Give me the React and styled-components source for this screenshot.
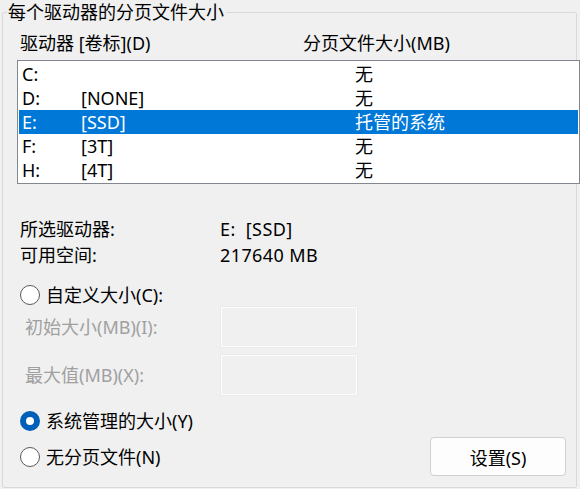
import React from 'react';
import styled, { createGlobalStyle } from 'styled-components';

const GlobalStyle = createGlobalStyle`
  html, body {
    margin: 0;
    padding: 0;
    background: #f0f0f0;
  }
  body {
    font-family: "Noto Sans", "Noto Sans CJK SC", sans-serif;
    font-size: 18px;
    color: #000;
  }
`;

const drives = [
  { letter: 'C:', label: '', size: '无' },
  { letter: 'D:', label: '[NONE]', size: '无' },
  { letter: 'E:', label: '[SSD]', size: '托管的系统', selected: true },
  { letter: 'F:', label: '[3T]', size: '无' },
  { letter: 'H:', label: '[4T]', size: '无' },
];

const App = () => {
  return (
    <>
      <GlobalStyle />
      <GroupBox>
        <Title>每个驱动器的分页文件大小</Title>

        <HeaderRow>
          <span>驱动器 [卷标](D)</span>
          <span>分页文件大小(MB)</span>
        </HeaderRow>

        <ListBox>
          {drives.map((d) => (
            <DriveRow key={d.letter} $selected={d.selected}>
              <span>{d.letter}</span>
              <span>{d.label}</span>
              <span>{d.size}</span>
            </DriveRow>
          ))}
        </ListBox>

        <InfoGrid>
          <span>所选驱动器:</span>
          <Value>E:  [SSD]</Value>
          <span>可用空间:</span>
          <Value>217640 MB</Value>
        </InfoGrid>

        <RadioRow $top={15}>
          <Radio />
          <span>自定义大小(C):</span>
        </RadioRow>

        <SizeGrid>
          <DisabledLabel>初始大小(MB)(I):</DisabledLabel>
          <SizeInput />
          <DisabledLabel>最大值(MB)(X):</DisabledLabel>
          <SizeInput />
        </SizeGrid>

        <RadioRow $top={14}>
          <Radio $checked />
          <span>系统管理的大小(Y)</span>
        </RadioRow>

        <BottomRow>
          <RadioRow $top={0}>
            <Radio />
            <span>无分页文件(N)</span>
          </RadioRow>
          <Button>设置(S)</Button>
        </BottomRow>
      </GroupBox>
    </>
  );
};

// group box drawn as a fieldset so the title cuts the top line
const GroupBox = styled.fieldset`
  box-sizing: border-box;
  margin: 0 0 0 2px;
  padding: 0;
  width: 575px;
  height: 488px;
  min-width: 0;
  border: 1px solid #d9d9d9;
  border-radius: 2px;
`;

const Title = styled.legend`
  margin-left: 4px;
  padding: 0 2px 0 1px;
  line-height: 24px;
`;

const HeaderRow = styled.div`
  display: grid;
  grid-template-columns: 283px 1fr;
  margin-top: 7px;
  padding-left: 17px;
  line-height: 24px;
`;

const ListBox = styled.div`
  margin: 5px -4px 0 14px;
  padding: 1px;
  background: #fff;
  border: 1px solid #828790;
`;

const DriveRow = styled.div`
  display: grid;
  grid-template-columns: 59px 274px 1fr;
  height: 24px;
  padding-left: 3px;
  line-height: 24px;
  white-space: nowrap;
  background: ${(p) => (p.$selected ? '#0078d7' : 'transparent')};
  color: ${(p) => (p.$selected ? '#fff' : '#000')};
`;

const InfoGrid = styled.div`
  display: grid;
  grid-template-columns: 200px 1fr;
  margin-top: 32px;
  padding-left: 17px;
  line-height: 26px;
`;

const Value = styled.span`
  white-space: pre;
  letter-spacing: 0.4px;
`;

const RadioRow = styled.div`
  display: flex;
  align-items: center;
  gap: 6px;
  height: 24px;
  margin-top: ${(p) => p.$top}px;
  padding-left: 17px;
  line-height: 24px;
`;

const Radio = styled.span`
  box-sizing: border-box;
  flex: none;
  width: 20px;
  height: 20px;
  border-radius: 50%;
  border: ${(p) => (p.$checked ? '6px solid #005fb8' : '1px solid #5a5a5a')};
  background: #fff;
`;

const SizeGrid = styled.div`
  display: grid;
  grid-template-columns: 196px 136px;
  row-gap: 8px;
  align-items: center;
  padding-left: 22px;
`;

const DisabledLabel = styled.span`
  color: #a0a0a0;
  line-height: 24px;
`;

const SizeInput = styled.div`
  box-sizing: border-box;
  height: 40px;
  border: 1px solid #fdfdfd;
  box-shadow: 0 0 0 1px #eaeaea;
`;

const BottomRow = styled.div`
  display: flex;
  align-items: center;
  justify-content: space-between;
  margin-top: 4px;
  padding-right: 10px;
  height: 39px;
`;

const Button = styled.div`
  box-sizing: border-box;
  width: 136px;
  height: 39px;
  display: flex;
  align-items: center;
  justify-content: center;
  background: #fdfdfd;
  border: 1px solid #d0d0d0;
  border-radius: 4px;
`;

export default App;
